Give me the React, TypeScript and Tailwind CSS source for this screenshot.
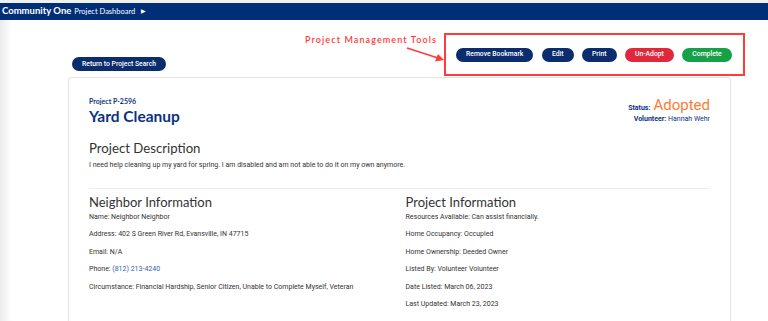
import React from 'react';

const head = { fontFamily: '"Lato", "Noto Sans", sans-serif' };
const body = { fontFamily: 'Roboto, "Liberation Sans", sans-serif' };

function Pill({ label, color }: { label: string; color: string }) {
  return (
    <button
      className={`h-[14px] whitespace-nowrap rounded-full px-[10px] text-[6.8px] font-medium leading-none text-white ${color}`}
      style={body}
    >
      {label}
    </button>
  );
}

const neighbor = [
  { k: 'Name', v: 'Neighbor Neighbor' },
  { k: 'Address', v: '402 S Green River Rd, Evansville, IN 47715' },
  { k: 'Email', v: 'N/A' },
  { k: 'Phone', v: '(812) 213-4240', link: true },
  { k: 'Circumstance', v: 'Financial Hardship, Senior Citizen, Unable to Complete Myself, Veteran' },
];

const project = [
  { k: 'Resources Available', v: 'Can assist financially.' },
  { k: 'Home Occupancy', v: 'Occupied' },
  { k: 'Home Ownership', v: 'Deeded Owner' },
  { k: 'Listed By', v: 'Volunteer Volunteer' },
  { k: 'Date Listed', v: 'March 06, 2023' },
  { k: 'Last Updated', v: 'March 23, 2023' },
];

function InfoList({ title, rows }: { title: string; rows: { k: string; v: string; link?: boolean }[] }) {
  return (
    <div className="flex flex-col">
      <h3 className="text-[13px] leading-[15px] text-[#333]" style={head}>
        {title}
      </h3>
      <div className="mt-[3px] flex flex-col gap-[9.4px]" style={body}>
        {rows.map((r) => (
          <p key={r.k} className="text-[7px] leading-[8px] text-[#333]">
            {r.k}: {r.link ? <span className="text-[#2f5fb3]">{r.v}</span> : r.v}
          </p>
        ))}
      </div>
    </div>
  );
}

export default function App() {
  return (
    <div className="relative h-[321px] w-[768px] overflow-hidden bg-white">
      <div className="h-[3px] bg-[#f1f1f1]" />
      {/* Nav bar */}
      <div className="flex h-[17px] items-center gap-[3px] bg-[#002e77] px-[2px] text-white" style={head}>
        <span className="text-[9.5px] font-bold">Community One</span>
        <span className="text-[7.5px]">Project Dashboard</span>
        <span className="ml-[3px] text-[5.5px]">&#9654;</span>
      </div>

      {/* left shadow */}
      <div className="pointer-events-none absolute bottom-0 left-0 top-[20px] w-[12px] bg-gradient-to-r from-[#ebebeb] to-white" />

      {/* Toolbar */}
      <div className="relative flex h-[57px] items-start">
        <div className="ml-[72px] mt-[28px]">
          <Pill label="Return to Project Search" color="bg-[#0b2d6e]" />
        </div>
        <div className="ml-auto mr-[23px] mt-[13px] flex h-[43px] w-[301px] items-center gap-[8.5px] border-2 border-[#ff3b3b] pl-[10px]">
          <Pill label="Remove Bookmark" color="bg-[#0b2d6e]" />
          <Pill label="Edit" color="bg-[#0b2d6e]" />
          <Pill label="Print" color="bg-[#0b2d6e]" />
          <Pill label="Un-Adopt" color="bg-[#e0283c]" />
          <Pill label="Complete" color="bg-[#18a049]" />
        </div>

        {/* annotation */}
        <span
          className="absolute left-[305px] top-[13px] text-[9px] font-semibold tracking-[1.1px] text-[#ff3b3b]"
          style={head}
        >
          Project Management Tools
        </span>
        <svg className="absolute left-[400px] top-[24px]" width="46" height="20" viewBox="0 0 46 20">
          <line x1="7" y1="4" x2="38" y2="14" stroke="#ff3b3b" strokeWidth="1.6" />
          <polygon points="44,16 35,17.5 38,10" fill="#ff3b3b" />
        </svg>
      </div>

      {/* Card */}
      <div className="ml-[68px] w-[663px] rounded-t-[3px] border border-[#e4e4e4] px-[20px] pb-[20px] pt-[19px]">
        <div className="flex items-start justify-between">
          <div className="flex flex-col">
            <span className="text-[7px] font-bold leading-[9px] text-[#0b3282]" style={head}>
              Project P-2596
            </span>
            <span className="text-[15.5px] font-bold leading-[20px] text-[#0b3282]" style={head}>
              Yard Cleanup
            </span>
          </div>
          <div className="flex flex-col items-end" style={body}>
            <div className="flex items-baseline gap-[3px]">
              <span className="text-[7px] font-bold text-[#0b3282]">Status:</span>
              <span className="text-[15px] leading-[16px] text-[#ff7a33]">Adopted</span>
            </div>
            <span className="text-[7px] leading-[10px] text-[#0b3282]">
              <b>Volunteer:</b> Hannah Wehr
            </span>
          </div>
        </div>

        <h2 className="mt-[14px] text-[13.2px] leading-[17px] text-[#333]" style={head}>
          Project Description
        </h2>
        <p className="mt-[4px] text-[7px] leading-[9px] text-[#333]" style={body}>
          I need help cleaning up my yard for spring. I am disabled and am not able to do it on my own anymore.
        </p>

        <div className="mt-[18px] h-px bg-[#ececec]" />

        <div className="mt-[6px] grid grid-cols-2 gap-x-[12px]">
          <InfoList title="Neighbor Information" rows={neighbor} />
          <InfoList title="Project Information" rows={project} />
        </div>
      </div>
    </div>
  );
}
